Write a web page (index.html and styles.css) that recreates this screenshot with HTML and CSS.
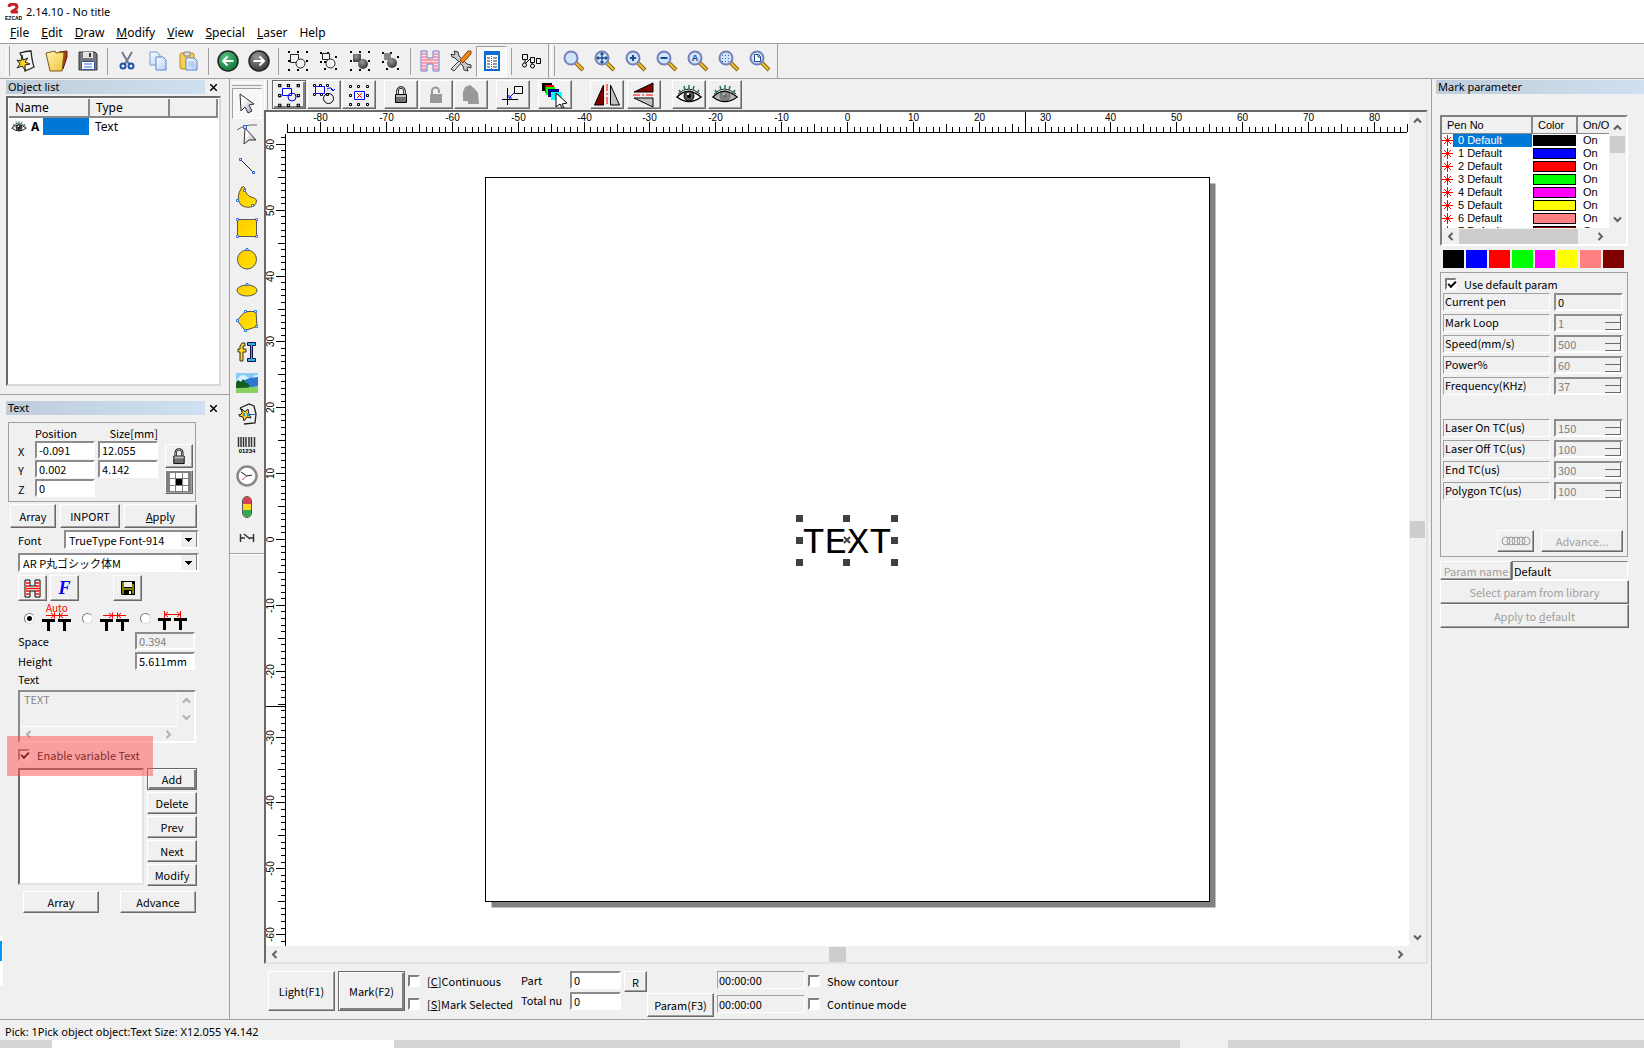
FILE: index.html
```html
<!DOCTYPE html>
<html lang="en">
<head>
  <meta charset="UTF-8">
  <meta name="viewport" content="width=device-width, initial-scale=1.0">
  <title>2.14.10 - No title</title>
  <link rel="stylesheet" href="styles.css">
</head>
<body>
  <svg class="defs" aria-hidden="true">
    <defs>
      <linearGradient id="gold" x1="0" y1="0" x2="1" y2="1"><stop offset="0" stop-color="#ffc800"/><stop offset="1" stop-color="#ffe600"/></linearGradient>
      <linearGradient id="steel" x1="0" y1="0" x2="1" y2="1"><stop offset="0.3" stop-color="#fff"/><stop offset="1" stop-color="#9a9ab4"/></linearGradient>
      <linearGradient id="folder" x1="0" y1="0" x2="1" y2="1"><stop offset="0" stop-color="#fff3b0"/><stop offset="1" stop-color="#f2c23c"/></linearGradient>
      <linearGradient id="paper" x1="0" y1="0" x2="1" y2="1"><stop offset="0" stop-color="#fff"/><stop offset="1" stop-color="#b4d0f4"/></linearGradient>
      <radialGradient id="green" cx=".4" cy=".3" r=".7"><stop offset="0" stop-color="#58c080"/><stop offset="1" stop-color="#0f7a3a"/></radialGradient>
      <radialGradient id="dark" cx=".4" cy=".3" r=".7"><stop offset="0" stop-color="#999"/><stop offset="1" stop-color="#3a3a3a"/></radialGradient>
    </defs>
    <symbol id="up" viewBox="0 0 9 9"><path d="M1 6.500L4.500 3 8 6.500" fill="none" stroke="currentColor" stroke-width="2"/></symbol>
    <symbol id="down" viewBox="0 0 9 9"><path d="M1 2.500L4.500 6 8 2.500" fill="none" stroke="currentColor" stroke-width="2"/></symbol>
    <symbol id="left" viewBox="0 0 9 9"><path d="M6.500 1L3 4.500 6.500 8" fill="none" stroke="currentColor" stroke-width="2"/></symbol>
    <symbol id="right" viewBox="0 0 9 9"><path d="M2.500 1L6 4.500 2.500 8" fill="none" stroke="currentColor" stroke-width="2"/></symbol>
    <symbol id="dots" viewBox="0 0 22 22"><path d="M1 1h2v2H1zM10 1h2v2h-2zM19 1h2v2h-2zM1 10h2v2H1zM19 10h2v2h-2zM1 19h2v2H1zM10 19h2v2h-2zM19 19h2v2h-2z"/></symbol>
    <symbol id="boxes" viewBox="0 0 22 22"><path d="M1.500 1.500h2v2h-2zM9.500 1.500h2v2h-2zM18.500 1.500h2v2h-2zM1.500 10.500h2v2h-2zM18.500 10.500h2v2h-2zM1.500 19.500h2v2h-2zM9.500 19.500h2v2h-2zM18.500 19.500h2v2h-2z" fill="#fff" stroke="#000"/></symbol>
    <symbol id="lens" viewBox="0 0 22 22"><path d="M13 13l7 7" stroke="#8a6414" stroke-width="4"/><path d="M13 13l6.500 6.500" stroke="#f0c030" stroke-width="2"/><circle cx="8" cy="8" r="6.500" fill="#cfe4f8" stroke="#7480b8" stroke-width="2"/></symbol>
    <symbol id="lock" viewBox="0 0 14 18"><path d="M3.500 8V5a3.500 3.500 0 0 1 7 0v3" fill="none" stroke="#000" stroke-width="2.500"/><path d="M3.500 8V5a3.500 3.500 0 0 1 7 0v3" fill="none" stroke="#ccc"/><path d="M1.500 8.500h11v8h-11z" fill="#707070" stroke="#000"/><path d="M2 9h10v2H2z" fill="#bbb"/></symbol>
    <symbol id="star" viewBox="0 0 11 11"><path d="M5.500 0v11M0 5.500h11M2 2l7 7M9 2l-7 7" stroke="red"/></symbol>
    <symbol id="eye" viewBox="0 0 26 20"><path d="M1 12Q12 1 25 12 13 21 1 12z" fill="#fff" stroke="#000" stroke-width="1.500"/><path d="M2 9Q12-1 24 9" fill="none" stroke="#222"/><circle cx="13" cy="11" r="5" fill="#555" stroke="#000"/><circle cx="13" cy="11" r="2"/><path d="M11 8h2v2h-2z" fill="#fff"/><path d="M3 5l2 3M8 1l1 4M13 0v4M18 1l-1 4M23 5l-2 3" stroke="#257060" stroke-width="1.500"/></symbol>
  </svg>

  <header class="titlebar">
    <svg class="logo" width="17" height="18" viewBox="0 0 17 18"><path d="M4 4q0-3 4-3t4 3q0 2-6 5h7" fill="none" stroke="#c81e28" stroke-width="3"/><text x="0" y="17" class="logo-text">EZCAD</text></svg>
    <span>2.14.10 - No title</span>
  </header>
  <nav class="menubar">
    <a href="#"><u>F</u>ile</a>
    <a href="#"><u>E</u>dit</a>
    <a href="#"><u>D</u>raw</a>
    <a href="#"><u>M</u>odify</a>
    <a href="#"><u>V</u>iew</a>
    <a href="#"><u>S</u>pecial</a>
    <a href="#"><u>L</u>aser</a>
    <a href="#">Help</a>
  </nav>

  <div class="toolbar">
    <i class="grip"></i>
    <button class="tool" aria-label="New"><svg width="22" height="22" viewBox="0 0 22 22"><path d="M5 3Q11 1 16 1q1 10 3 16-4 2-9 4Q9 10 5 3z" fill="#f4f4f4" stroke="#222" stroke-width="1.300"/><path d="M7 5l1 5 5-2-3 4 5 2-5 1 0 5-3-4-5 2 3-4-3-4 4 1z" fill="#ffd21e" stroke="#222"/></svg></button>
    <button class="tool" aria-label="Open"><svg width="24" height="22" viewBox="0 0 24 22"><path d="M14 2l8-1v6l-4 12-5 1z" fill="#a33d12" stroke="#5a2208"/><path d="M1 3l9-2 1 2 7-1 1 2-2 17-12 0z" fill="url(#folder)" stroke="#7a5a18"/></svg></button>
    <button class="tool" aria-label="Save"><svg width="20" height="20" viewBox="0 0 20 20"><path d="M1 1h16l2 2v16H1z" fill="#77777d" stroke="#333"/><path d="M5 1h10v6H5z" fill="#e4e4e4"/><path d="M11 2h2v4h-2z" fill="#333"/><rect x="3.500" y="10.500" width="13" height="8" rx="1" fill="#fff" stroke="#2a4c9a"/><path d="M6 13h8M6 16h8" stroke="#2a6cd0"/></svg></button>
    <i class="sep"></i>
    <button class="tool" aria-label="Cut"><svg width="16" height="20" viewBox="0 0 16 20"><path d="M3 1l7 12M13 1L6 13" stroke="#6c7c94" stroke-width="2"/><circle cx="4" cy="15" r="2.500" fill="none" stroke="#2054a8" stroke-width="2"/><circle cx="12" cy="15" r="2.500" fill="none" stroke="#2054a8" stroke-width="2"/></svg></button>
    <button class="tool" aria-label="Copy"><svg width="18" height="20" viewBox="0 0 18 20"><path d="M1 1h7l3 3v10H1z" fill="url(#paper)" stroke="#7a9cd8"/><path d="M7 6h7l3 3v10H7z" fill="url(#paper)" stroke="#5a86d0"/></svg></button>
    <button class="tool" aria-label="Paste"><svg width="19" height="20" viewBox="0 0 19 20"><rect x="1" y="2" width="14" height="16" rx="2" fill="#f4cf50" stroke="#b89018"/><path d="M5 1h6v4H5z" fill="#ddd" stroke="#888"/><path d="M7 7h8l3 3v9H7z" fill="url(#paper)" stroke="#5a86d0"/><path d="M9 11h6M9 13h7M9 15h7" stroke="#9ab8e4"/></svg></button>
    <i class="sep"></i>
    <button class="tool" aria-label="Undo"><svg width="22" height="22" viewBox="0 0 22 22"><circle cx="11" cy="11" r="10" fill="url(#green)" stroke="#222" stroke-width="1.500"/><path d="M16.500 11H6M10.500 6.500L6 11l4.500 4.500" fill="none" stroke="#fff" stroke-width="2"/></svg></button>
    <button class="tool" aria-label="Redo"><svg width="22" height="22" viewBox="0 0 22 22"><circle cx="11" cy="11" r="10" fill="url(#dark)" stroke="#222" stroke-width="1.500"/><path d="M5.500 11H16M11.500 6.500L16 11l-4.500 4.500" fill="none" stroke="#fff" stroke-width="2"/></svg></button>
    <i class="sep"></i>
    <button class="tool" aria-label="Combine"><svg width="22" height="22" viewBox="0 0 22 22"><use href="#dots"/><path d="M3.500 4.500h8v8h-8z" fill="#f4f4f4" stroke="#222"/><circle cx="13.500" cy="13.500" r="4.500" fill="#f4f4f4" stroke="#222"/></svg></button>
    <button class="tool" aria-label="Uncombine"><svg width="22" height="22" viewBox="0 0 22 22"><path d="M2 2h2v2H2zM9 2h2v2H9zM17 6h2v2h-2zM2 11h2v2H2zM6 18h2v2H6zM17 18h2v2h-2zM6 11h2v2H6z"/><path d="M4.500 3.500h7v6h-7z" fill="#f4f4f4" stroke="#222"/><circle cx="12.500" cy="13.500" r="4.500" fill="#f4f4f4" stroke="#222"/></svg></button>
    <button class="tool" aria-label="Group"><svg width="22" height="22" viewBox="0 0 22 22"><use href="#dots"/><rect x="4" y="4" width="8" height="8" rx="1" fill="url(#dark)"/><circle cx="14" cy="14" r="5" fill="url(#dark)"/></svg></button>
    <button class="tool" aria-label="Ungroup"><svg width="22" height="22" viewBox="0 0 22 22"><path d="M2 2h2v2H2zM10 2h2v2h-2zM17 6h2v2h-2zM2 11h2v2H2zM6 18h2v2H6zM17 18h2v2h-2z"/><rect x="4" y="3" width="7" height="7" rx="1" fill="#888"/><circle cx="12" cy="13" r="5" fill="url(#dark)"/></svg></button>
    <i class="sep"></i>
    <button class="tool" aria-label="Hatch"><svg width="20" height="22" viewBox="0 0 20 22"><path d="M1 1h6v7h6V1h6v20h-6v-7H7v7H1z" fill="#ffdce0" stroke="#6878e0"/><path d="M2 4h4M2 7h4M14 4h4M14 7h4M2 10h16M2 13h16M2 16h4M2 19h4M14 16h4M14 19h4" stroke="#f06078"/></svg></button>
    <button class="tool" aria-label="Options"><svg width="22" height="22" viewBox="0 0 22 22"><path d="M1 4l3 1 1-1-1-3 4 1 1 4 8 8 4 1 0 3-3-1-1 1 1 3-4-1-1-4-8-8-3-1z" fill="#c8c8c8" stroke="#333"/><path d="M18 1l3 0 0 3-8 9-3-3z" fill="#f08418" stroke="#8a4408"/><path d="M9 11l2 2-7 8-3-2z" fill="#ddd" stroke="#333"/></svg></button>
    <button class="tool pressed" aria-label="Object properties"><svg width="16" height="20" viewBox="0 0 16 20"><path d="M1 1h14v18H1z" fill="#fff" stroke="#0a6cd0" stroke-width="2"/><path d="M1 1h14v3H1z" fill="#0a6cd0"/><path d="M3 7h3M9 7h4M3 10h3M9 10h4M3 13h3M9 13h4M3 16h3M9 16h4" stroke="#333"/><path d="M7.500 5v13" stroke="#0a6cd0" stroke-dasharray="1 1"/></svg></button>
    <i class="sep"></i>
    <button class="tool" aria-label="Sort"><svg width="20" height="16" viewBox="0 0 20 16"><path d="M1.500 1.500h5v5h-5zM9.500 4.500h4v5h-4zM15.500 5.500h4v5h-4z" fill="none" stroke="#000"/><circle cx="3.500" cy="12" r="2" fill="none" stroke="#000"/><circle cx="11.500" cy="13" r="2" fill="none" stroke="#000"/><path d="M4 6v4M5 10l4-4M11 9v2" stroke="#000"/></svg></button>
    <i class="edge"></i>
    <i class="grip zoom-grip"></i>
    <button class="tool" aria-label="Zoom"><svg width="22" height="22"><use href="#lens"/></svg></button>
    <button class="tool" aria-label="Pan"><svg width="22" height="22" viewBox="0 0 22 22"><use href="#lens"/><path d="M8 3v10M3 8h10M6.500 4.500L8 3l1.500 1.500M6.500 11.500L8 13l1.500-1.500M4.500 6.500L3 8l1.500 1.500M11.500 6.500L13 8l-1.500 1.500" fill="none" stroke="#1c4a90" stroke-width="1.300"/></svg></button>
    <button class="tool" aria-label="Zoom in"><svg width="22" height="22" viewBox="0 0 22 22"><use href="#lens"/><path d="M8 5v6M5 8h6" stroke="#1c4a90" stroke-width="2"/></svg></button>
    <button class="tool" aria-label="Zoom out"><svg width="22" height="22" viewBox="0 0 22 22"><use href="#lens"/><path d="M4.500 8h7" stroke="#1c4a90" stroke-width="2"/></svg></button>
    <button class="tool" aria-label="Zoom all"><svg width="22" height="22" viewBox="0 0 22 22"><use href="#lens"/><text x="8" y="11" class="lens-text">A</text></svg></button>
    <button class="tool" aria-label="Zoom selection"><svg width="22" height="22" viewBox="0 0 22 22"><use href="#lens"/><path d="M4 5.500h9M4 8.500h9M4 11.500h9" stroke="#3a68b0" stroke-dasharray="1 2"/></svg></button>
    <button class="tool" aria-label="Zoom page"><svg width="22" height="22" viewBox="0 0 22 22"><use href="#lens"/><path d="M5.500 4.500h4l2 2v5h-6zM9 5v2h2" fill="#fff" stroke="#1c4a90"/></svg></button>
    <i class="edge"></i>
  </div>

  <main class="workspace">
    <aside class="dock">
      <section class="objects">
        <div class="panel-head"><h2>Object list</h2><button class="close" aria-label="Close object list"><svg width="7" height="7" viewBox="0 0 7 7"><path d="M0 0l7 7M7 0L0 7" stroke="#000" stroke-width="1.500"/></svg></button></div>
        <div class="object-box">
          <table class="object-table">
            <colgroup><col class="col-name"><col class="col-type"><col></colgroup>
            <thead><tr><th>Name</th><th>Type</th><th></th></tr></thead>
            <tbody><tr>
              <td class="object-name"><svg width="16" height="12"><use href="#eye"/></svg><b>A</b><i></i></td>
              <td>Text</td><td></td>
            </tr></tbody>
          </table>
        </div>
      </section>

      <section class="props">
        <div class="panel-head"><h2>Text</h2><button class="close" aria-label="Close text panel"><svg width="7" height="7" viewBox="0 0 7 7"><path d="M0 0l7 7M7 0L0 7" stroke="#000" stroke-width="1.500"/></svg></button></div>
        <div class="position">
          <div class="coords">
            <span></span><span>Position</span><span class="size">Size[mm]</span>
            <label for="px">X</label><input id="px" class="field" value="-0.091"><input class="field" value="12.055" aria-label="Width">
            <label for="py">Y</label><input id="py" class="field" value="0.002"><input class="field" value="4.142" aria-label="Height">
            <label for="pz">Z</label><input id="pz" class="field" value="0">
          </div>
          <div class="pos-buttons">
            <button class="btn" aria-label="Lock ratio"><svg width="14" height="17"><use href="#lock"/></svg></button>
            <button class="btn anchor" aria-label="Anchor"><svg width="18" height="18" viewBox="0 0 18 18"><path d="M0 0h5v5H0zM6 0h6v5H6zM13 0h5v5h-5zM0 6h5v6H0zM13 6h5v6h-5zM0 13h5v5H0zM6 13h6v5H6zM13 13h5v5h-5z" fill="#fff"/><path d="M6 6h6v6H6z"/></svg></button>
          </div>
        </div>
        <div class="actions"><button class="btn w-array">Array</button><button class="btn w-import">INPORT</button><button class="btn grow"><u>A</u>pply</button></div>
        <div class="font-row"><label for="fonttype">Font</label><select id="fonttype"><option>TrueType Font-914</option></select></div>
        <select class="font-name" aria-label="Font name"><option>AR P丸ゴシック体M</option></select>
        <div class="font-tools">
          <button class="btn" aria-label="Hatch text"><svg width="17" height="19" viewBox="0 0 17 19"><path d="M1 1h5v6h5V1h5v17h-5v-6H6v6H1z" fill="#fff" stroke="#000"/><path d="M2 4h4M2 7h4M11 4h4M11 7h4M2 9.500h13M2 12h4M2 15h4M11 12h4M11 15h4" stroke="red" stroke-width="1.500"/></svg></button>
          <button class="btn font-f" aria-label="Font settings">F</button>
          <button class="btn save" aria-label="Save font"><svg width="14" height="14" viewBox="0 0 14 14"><path d="M0 0h14v14H1l-1-1z"/><path d="M1 1h2v6h8V3h2v10H1z" fill="#808000"/><path d="M3 1h8v5H3z" fill="#eee"/><path d="M3 9h8v5H3z"/><path d="M8 10h2v3H8z" fill="#fff"/></svg></button>
        </div>
        <div class="spacing">
          <label><input type="radio" name="space" checked aria-label="Auto"><svg width="30" height="30" viewBox="0 -3 30 30"><text x="5" y="8" class="auto-text">Auto</text><path d="M5 11.500h22M13.500 8.500v6M18.500 8.500v6M10 9l3 2.500-3 2.500M22 9l-3 2.500 3 2.500" fill="none" stroke="red"/><path d="M1 15h13v3H9v9H6v-9H1zM17 15h13v3h-5v9h-3v-9h-5z"/></svg></label>
          <label><input type="radio" name="space" aria-label="Inner"><svg width="30" height="30" viewBox="0 -3 30 30"><path d="M4 11.500h23M13.500 8.500v6M18.500 8.500v6M10 9l3 2.500-3 2.500M22 9l-3 2.500 3 2.500" fill="none" stroke="red"/><path d="M1 15h13v3H9v9H6v-9H1zM17 15h13v3h-5v9h-3v-9h-5z"/></svg></label>
          <label><input type="radio" name="space" aria-label="Center"><svg width="30" height="30" viewBox="0 -3 30 30"><path d="M7 10.500h17M7.500 7v7M23.500 7v7M11 8l-3 2.500 3 2.500M20 8l3 2.500-3 2.500" fill="none" stroke="red"/><path d="M1 14h13v3H9v9H6v-9H1zM17 14h13v3h-5v9h-3v-9h-5z"/></svg></label>
        </div>
        <div class="line"><label for="space">Space</label><input id="space" class="field" value="0.394" disabled></div>
        <div class="line"><label for="height">Height</label><input id="height" class="field" value="5.611mm"></div>
        <label class="text-label" for="content">Text</label>
        <div class="memo">
          <textarea id="content" disabled>TEXT</textarea>
          <div class="memo-v"><svg width="9" height="9"><use href="#up"/></svg><svg width="9" height="9"><use href="#down"/></svg></div>
          <div class="memo-h"><svg width="9" height="9"><use href="#left"/></svg><svg width="9" height="9"><use href="#right"/></svg></div>
        </div>
        <div class="variable">
          <label class="check"><input type="checkbox" checked>Enable variable Text</label>
          <div class="variable-body">
            <div class="listbox"></div>
            <div class="stack"><button class="btn default">Add</button><button class="btn">Delete</button><button class="btn">Prev</button><button class="btn">Next</button><button class="btn">Modify</button></div>
          </div>
          <div class="highlight"></div>
        </div>
        <div class="foot"><button class="btn">Array</button><button class="btn">Advance</button></div>
      </section>
      <i class="behind"></i>
    </aside>

    <div class="palette">
      <div class="palette-tools">
        <i class="hgrip"></i>
        <button class="tool pressed" aria-label="Pick"><svg width="18" height="22" viewBox="0 0 18 22"><path d="M2 1l14 10-5 1 3 6-4 2-3-6-4 4z" fill="url(#steel)" stroke="#333"/></svg></button>
        <button class="tool" aria-label="Node edit"><svg width="20" height="22" viewBox="0 0 20 22"><path d="M0 6q8-6 20-5" fill="none" stroke="#666"/><path d="M8 4l11 12-7 0-5 4z" fill="url(#steel)" stroke="#333"/><path d="M6.500 1.500h3v3h-3z" fill="#cfe4ff" stroke="#2864d0"/></svg></button>
        <button class="tool" aria-label="Line"><svg width="16" height="16" viewBox="0 0 16 16"><path d="M2 2l12 12" stroke="#222"/><path d="M.5.5h2v2h-2zM13.500 13.500h2v2h-2z" fill="#fff" stroke="#2864d0"/></svg></button>
        <button class="tool" aria-label="Curve"><svg width="22" height="22" viewBox="0 0 22 22"><path d="M6 1Q-1 12 5 19q6 4 13 1 5-6 0-8-9-2-9-10-1-2-3-1z" fill="url(#gold)" stroke="#6a4c30"/><path d="M7.500 3.500h2v2h-2zM.5 13.500h2v2h-2zM15.500 18.500h2v2h-2z" fill="#fff" stroke="#2878e0"/></svg></button>
        <button class="tool" aria-label="Rectangle"><svg width="22" height="20" viewBox="0 0 22 20"><path d="M1.500 1.500h19v17h-19z" fill="url(#gold)" stroke="#555"/><path d="M.5.5h2v2h-2zM19.500.5h2v2h-2zM.5 17.500h2v2h-2zM19.500 17.500h2v2h-2z" fill="#fff" stroke="#4a6ee0"/></svg></button>
        <button class="tool" aria-label="Circle"><svg width="22" height="22" viewBox="0 0 22 22"><circle cx="11" cy="11.500" r="9.500" fill="url(#gold)" stroke="#555"/><path d="M10 .5h2v2h-2z" fill="#fff" stroke="#2878e0"/></svg></button>
        <button class="tool" aria-label="Ellipse"><svg width="22" height="14" viewBox="0 0 22 14"><ellipse cx="11" cy="7.500" rx="10" ry="5.500" fill="url(#gold)" stroke="#555"/><path d="M10 .5h2v2h-2z" fill="#fff" stroke="#2878e0"/></svg></button>
        <button class="tool" aria-label="Polygon"><svg width="22" height="22" viewBox="0 0 22 22"><path d="M1 10.500l8-9h11l1 15-12 4z" fill="url(#gold)" stroke="#555"/><path d="M.5 9.500h2v2h-2zM8.500.5h2v2h-2zM18.500.5h2v2h-2zM19.500 15.500h2v2h-2zM8.500 19.500h2v2h-2z" fill="#fff" stroke="#2878e0"/></svg></button>
        <button class="tool" aria-label="Text"><svg width="20" height="20" viewBox="0 0 20 20"><path d="M8 1H5L3 4v3H1v3h2v9h3v-9h3V7H6V4h2z" fill="#ffd21e" stroke="#333"/><path d="M10.500.5h8v3h-3v13h3v3h-8v-3h3v-13h-3z" fill="#38b0f0" stroke="#114"/></svg></button>
        <button class="tool" aria-label="Bitmap"><svg width="22" height="20" viewBox="0 0 22 20"><path d="M0 0h22v20H0z" fill="#8ccaf6"/><path d="M3 4q4-4 8 0t8-2l3 0v6H0z" fill="#d8f0ff"/><path d="M6 8l8-3 8-1v10H8z" fill="#2c78d0"/><path d="M0 10l2-3 3 2 2-3 3 4 2 0 2 5-14 3z" fill="#125c20"/><path d="M0 15q12 0 22-2v7H0z" fill="#88d060"/></svg></button>
        <button class="tool" aria-label="Vector file"><svg width="20" height="22" viewBox="0 0 20 22"><path d="M3 5l9-4 5 2 2 8-1 9-11 1M3 5l3 4" fill="none" stroke="#222" stroke-width="1.300"/><path d="M1 11.500h18" stroke="#2864b0"/><path d="M5 6l3 3 3-3 1 5 2 4-4-1-3 4-1-4-4-1 3-3z" fill="#ffc81e" stroke="#222"/><path d="M6 10h2v3H6zM10 10h2v3h-2z" fill="#18a0e8"/></svg></button>
        <button class="tool" aria-label="Barcode"><svg width="20" height="16" viewBox="0 0 20 16"><path d="M1.500 0v10M4 0v10M6.500 0v10M9 0v10M12 0v10M14.500 0v10M17.500 0v10" stroke="#333" stroke-width="1.500"/><text x="10" y="16" class="barcode-text">01234</text></svg></button>
        <button class="tool" aria-label="Timer"><svg width="22" height="22" viewBox="0 0 22 22"><circle cx="11" cy="11" r="9.500" fill="#fff" stroke="#888" stroke-width="2.500"/><path d="M5 7l6 4 5-1" fill="none" stroke="#222"/><path d="M11 11l-5 4" stroke="#e05050"/></svg></button>
        <button class="tool" aria-label="IO"><svg width="10" height="22" viewBox="0 0 10 22"><rect x=".5" y=".5" width="9" height="21" rx="4.500" fill="#ffd820" stroke="#555"/><path d="M1 8V5a4 4 0 0 1 8 0v3z" fill="#d84058"/><path d="M1 14v3a4 4 0 0 0 8 0v-3z" fill="#30a858"/></svg></button>
        <button class="tool" aria-label="Encoder"><svg width="16" height="10" viewBox="0 0 16 10"><path d="M1.500 1v8M14.500 1v8M2 5h4M5 1l6 5M10 5h4" fill="none" stroke="#333" stroke-width="1.500"/></svg></button>
      </div>
    </div>

    <section class="editor">
      <div class="edit-tools">
        <i class="grip"></i>
        <div class="set">
          <button class="btn default" aria-label="Select mode"><svg width="24" height="24" viewBox="0 0 24 24"><use href="#boxes"/><path d="M5.500 5.500h9v7h-9z" fill="#fff" stroke="#00f"/><circle cx="15" cy="14" r="4" fill="none" stroke="#00f"/></svg></button>
          <button class="btn" aria-label="Rotate mode"><svg width="24" height="24" viewBox="0 0 24 24"><path d="M1.500 1.500h2v2h-2zM7.500 1.500h2v2h-2zM14.500 1.500h2v2h-2zM1.500 10.500h2v2h-2zM8.500 10.500h2v2h-2zM14.500 10.500h2v2h-2z" fill="#fff" stroke="#000"/><path d="M3.500 3.500h9v7h-9z" fill="#fff" stroke="#00f"/><circle cx="16.500" cy="15.500" r="5" fill="none" stroke="#000"/><path d="M15 6q5-3 6 2m-2-2l2 2 2-2" fill="none" stroke="#00f"/></svg></button>
          <button class="btn" aria-label="Delete mode"><svg width="22" height="22" viewBox="0 0 22 22"><use href="#boxes"/><path d="M6.500 7.500h10v8h-10z" fill="#fff" stroke="#00f"/><path d="M9 9l5 5M14 9l-5 5" stroke="red"/></svg></button>
        </div>
        <div class="set">
          <button class="btn" aria-label="Lock"><svg width="14" height="18"><use href="#lock"/></svg></button>
          <button class="btn" aria-label="Unlock" disabled><svg width="14" height="18" viewBox="0 0 14 18"><path d="M3 9V5a3.500 3.500 0 0 1 7 0v2" fill="none" stroke="#999" stroke-width="2"/><path d="M1 8h12v9H1z" fill="#999"/></svg></button>
          <button class="btn" aria-label="Unlock all" disabled><svg width="18" height="20" viewBox="0 0 18 20"><path d="M1 7l2-5 5-2 5 4 3 4 1 11H6v-3H1z" fill="#999"/></svg></button>
        </div>
        <div class="set"><button class="btn" aria-label="Put to origin"><svg width="22" height="20" viewBox="0 0 22 20"><path d="M0 14.500h16M5.500 3v17" stroke="#000"/><path d="M12.500 1.500h8v7h-8z" fill="none" stroke="#000"/><path d="M12 8l-5 5m0-3v3h3" fill="none" stroke="#00f"/></svg></button></div>
        <div class="set"><button class="btn" aria-label="Pen order"><svg width="26" height="26" viewBox="0 0 26 26"><path d="M0 1h10v8H0z"/><path d="M3 3h9v8H3z" fill="red"/><path d="M4 5h9v8H4z" fill="#0f0"/><path d="M6 7h11v8H6z" fill="#000080"/><path d="M9 10h11v8H9z" fill="#0ff"/><path d="M14 11l11 10-5 1 2 4h-2l-2-4-4 3z" fill="#fff" stroke="#000"/></svg></button></div>
        <div class="set wide">
          <button class="btn" aria-label="Mirror horizontal"><svg width="26" height="22" viewBox="0 0 26 22"><path d="M9.500 1v20h-9z" fill="#800000" stroke="#000"/><path d="M16.500 1v20h9z" fill="#c0c0c0" stroke="#000"/><path d="M13 0v22" stroke="red" stroke-dasharray="7 2 2 2"/></svg></button>
          <button class="btn" aria-label="Mirror vertical"><svg width="22" height="26" viewBox="0 0 22 26"><path d="M20 1v9H1z" fill="#800000" stroke="#000"/><path d="M20 25v-9H1z" fill="#c0c0c0" stroke="#000"/><path d="M0 13h22" stroke="red" stroke-dasharray="7 2 2 2"/></svg></button>
        </div>
        <div class="set last">
          <button class="btn" aria-label="Show"><svg width="26" height="20"><use href="#eye"/></svg></button>
          <button class="btn" aria-label="Hide"><svg width="26" height="20" viewBox="0 0 26 20"><use href="#eye"/><path d="M2 12Q12 2 24 12 13 20 2 12z" fill="#999" fill-opacity=".7"/></svg></button>
        </div>
      </div>

      <div class="frame">
        <svg class="canvas" id="canvas"></svg>
        <div class="vbar"><svg width="9" height="9"><use href="#up"/></svg><i></i><svg width="9" height="9"><use href="#down"/></svg></div>
        <div class="hbar"><svg width="9" height="9"><use href="#left"/></svg><i></i><svg width="9" height="9"><use href="#right"/></svg></div>
      </div>

      <div class="mark-bar">
        <button class="btn big">Light(F1)</button>
        <button class="btn big default">Mark(F2)</button>
        <div class="pair checks"><label class="check"><input type="checkbox"><span>[<u>C</u>]Continuous</span></label><label class="check"><input type="checkbox"><span>[<u>S</u>]Mark Selected</span></label></div>
        <div class="pair counts"><label for="part">Part</label><label for="total">Total nu</label></div>
        <div class="pair numbers"><input id="part" class="field" value="0"><input id="total" class="field" value="0"></div>
        <button class="btn reset">R</button>
        <button class="btn param-key">Param(F3)</button>
        <div class="pair times"><output>00:00:00</output><output>00:00:00</output></div>
        <div class="pair"><label class="check"><input type="checkbox">Show contour</label><label class="check"><input type="checkbox">Continue mode</label></div>
      </div>
    </section>

    <aside class="mark">
      <h2>Mark parameter</h2>
      <div class="pen-box">
        <div class="pen-rows">
          <table class="pens">
            <colgroup><col class="pen-no"><col class="pen-color"><col></colgroup>
            <thead><tr><th>Pen No</th><th>Color</th><th>On/O</th></tr></thead>
            <tbody>
              <tr><td><svg width="11" height="11"><use href="#star"/></svg><span class="selected">0 Default</span></td><td><i class="c0"></i></td><td>On</td></tr>
              <tr><td><svg width="11" height="11"><use href="#star"/></svg><span>1 Default</span></td><td><i class="c1"></i></td><td>On</td></tr>
              <tr><td><svg width="11" height="11"><use href="#star"/></svg><span>2 Default</span></td><td><i class="c2"></i></td><td>On</td></tr>
              <tr><td><svg width="11" height="11"><use href="#star"/></svg><span>3 Default</span></td><td><i class="c3"></i></td><td>On</td></tr>
              <tr><td><svg width="11" height="11"><use href="#star"/></svg><span>4 Default</span></td><td><i class="c4"></i></td><td>On</td></tr>
              <tr><td><svg width="11" height="11"><use href="#star"/></svg><span>5 Default</span></td><td><i class="c5"></i></td><td>On</td></tr>
              <tr><td><svg width="11" height="11"><use href="#star"/></svg><span>6 Default</span></td><td><i class="c6"></i></td><td>On</td></tr>
              <tr><td><svg width="11" height="11"><use href="#star"/></svg><span>7 Default</span></td><td><i class="c7"></i></td><td>On</td></tr>
            </tbody>
          </table>
        </div>
        <div class="vbar pen-v"><svg width="9" height="9"><use href="#up"/></svg><i></i><svg width="9" height="9"><use href="#down"/></svg></div>
        <div class="hbar pen-h"><svg width="9" height="9"><use href="#left"/></svg><i></i><svg width="9" height="9"><use href="#right"/></svg></div>
      </div>
      <div class="swatches"><i class="c0"></i><i class="c1"></i><i class="c2"></i><i class="c3"></i><i class="c4"></i><i class="c5"></i><i class="c6"></i><i class="c7"></i></div>
      <div class="params">
        <label class="check"><input type="checkbox" checked>Use default param</label>
        <div class="param"><label for="pen">Current pen</label><input id="pen" class="field" value="0" readonly></div>
        <div class="param"><label for="loop">Mark Loop</label><div class="spin"><input id="loop" value="1" disabled><i></i><i></i></div></div>
        <div class="param"><label for="speed">Speed(mm/s)</label><div class="spin"><input id="speed" value="500" disabled><i></i><i></i></div></div>
        <div class="param"><label for="power">Power%</label><div class="spin"><input id="power" value="60" disabled><i></i><i></i></div></div>
        <div class="param"><label for="freq">Frequency(KHz)</label><div class="spin"><input id="freq" value="37" disabled><i></i><i></i></div></div>
        <div class="param gap"><label for="lon">Laser On TC(us)</label><div class="spin"><input id="lon" value="150" disabled><i></i><i></i></div></div>
        <div class="param"><label for="loff">Laser Off TC(us)</label><div class="spin"><input id="loff" value="100" disabled><i></i><i></i></div></div>
        <div class="param"><label for="end">End TC(us)</label><div class="spin"><input id="end" value="300" disabled><i></i><i></i></div></div>
        <div class="param"><label for="poly">Polygon TC(us)</label><div class="spin"><input id="poly" value="100" disabled><i></i><i></i></div></div>
        <div class="advance">
          <button class="btn" aria-label="Wobble" disabled><svg width="30" height="10" viewBox="0 0 30 10"><g fill="none" stroke="#999"><circle cx="5" cy="5" r="4"/><circle cx="10" cy="5" r="4"/><circle cx="15" cy="5" r="4"/><circle cx="20" cy="5" r="4"/><circle cx="25" cy="5" r="4"/></g></svg></button>
          <button class="btn" disabled>Advance...</button>
        </div>
      </div>
      <div class="param-name"><button class="btn" disabled>Param name</button><input value="Default" aria-label="Param name" readonly></div>
      <button class="btn lib" disabled>Select param from library</button>
      <button class="btn lib" disabled><span>Apply to <u>d</u>efault</span></button>
    </aside>
  </main>

  <footer class="status">Pick: 1Pick object object:Text Size: X12.055 Y4.142</footer>
  <div class="strip"><i></i><i></i></div>
  <script src="script.js"></script>
</body>
</html>
```
FILE: styles.css
```css
* {
  box-sizing: border-box;
}
html,
body {
  height: 100%;
}
body {
  margin: 0;
  display: flex;
  flex-direction: column;
  background: #f0f0f0;
  color: #000;
  font: 11px/14px "Noto Sans CJK JP", sans-serif;
  overflow: hidden;
}
svg {
  display: block;
  flex: none;
}
i {
  font-style: normal;
}
button,
input,
select,
textarea {
  font: inherit;
  color: inherit;
  margin: 0;
}
.defs {
  position: absolute;
  width: 0;
  height: 0;
}

/* window title and menu */
.titlebar {
  display: flex;
  align-items: center;
  gap: 4px;
  height: 24px;
  padding-left: 5px;
  background: #fff;
  font: 11px/16px "Noto Sans", sans-serif;
}
.logo-text {
  font: bold 5px "Liberation Sans", sans-serif;
}
.menubar {
  display: flex;
  gap: 12px;
  height: 19px;
  padding-left: 10px;
  background: #fff;
  font: 12px/17px "Noto Sans", sans-serif;
}
.menubar a {
  color: #000;
  text-decoration: none;
}

/* main toolbar */
.toolbar {
  display: flex;
  align-items: center;
  height: 36px;
  padding-left: 6px;
  border-top: 1px solid #a0a0a0;
  border-bottom: 1px solid #a0a0a0;
}
.grip {
  width: 4px;
  height: 30px;
  border-right: 1px solid #a0a0a0;
  border-left: 1px solid #fff;
}
.zoom-grip {
  margin: 0 3px 0 2px;
}
.sep {
  width: 8px;
  height: 27px;
  background: linear-gradient(#a0a0a0, #a0a0a0) 4px 0 / 1px 100% no-repeat;
}
.edge {
  width: 3px;
  height: 34px;
  border-right: 1px solid #a0a0a0;
}
.tool {
  display: flex;
  align-items: center;
  justify-content: center;
  width: 31px;
  height: 31px;
  padding: 0;
  border: 0;
  background: none;
}
.tool.pressed {
  border: 1px solid;
  border-color: #a0a0a0 #fff #fff #a0a0a0;
  background: #f8f8f8;
}
.lens-text {
  font: bold 9px "Liberation Sans", sans-serif;
  fill: #1c4a90;
  text-anchor: middle;
}

/* shared controls */
.btn {
  display: flex;
  align-items: center;
  justify-content: center;
  padding: 0;
  border: 1px solid;
  border-color: #fff #696969 #696969 #fff;
  box-shadow: inset -1px -1px #a0a0a0;
  background: #f0f0f0;
  white-space: nowrap;
}
.btn.default {
  border-color: #696969;
  box-shadow: inset 1px 1px #fff, inset -2px -2px #808080;
}
.btn:disabled {
  color: #a0a0a0;
}
.field {
  width: 100%;
  min-width: 0;
  height: 18px;
  padding: 0 2px;
  border: 2px solid;
  border-color: #8c8c8c #fff #fff #8c8c8c;
  border-radius: 0;
  background: #fff;
  line-height: 14px;
}
.field:disabled,
.field:read-only {
  background: #f0f0f0;
}
.field:disabled {
  color: #808080;
}
.check {
  display: flex;
  align-items: center;
  gap: 7px;
  white-space: nowrap;
}
.check input {
  appearance: none;
  flex: none;
  display: grid;
  width: 12px;
  height: 12px;
  border: 2px solid;
  border-color: #808080 #fff #fff #808080;
  background: #fff;
}
.check input:checked::before {
  content: "";
  width: 6px;
  height: 3px;
  margin: 1px;
  border: solid #000;
  border-width: 0 0 2px 2px;
  transform: rotate(-45deg);
}
/* drop-down arrow made of four stacked bars on a grey button */
select {
  appearance: none;
  height: 19px;
  padding: 0 3px;
  border: 2px solid;
  border-color: #8c8c8c #fff #fff #8c8c8c;
  border-radius: 0;
  background-color: #fff;
  background-image: linear-gradient(#000, #000), linear-gradient(#000, #000), linear-gradient(#000, #000), linear-gradient(#000, #000), linear-gradient(90deg, #f0f0f0 15px, #808080 15px);
  background-size: 7px 1px, 5px 1px, 3px 1px, 1px 1px, 16px 100%;
  background-position: right 5px top 6px, right 6px top 7px, right 7px top 8px, right 8px top 9px, right top;
  background-repeat: no-repeat;
  line-height: 14px;
}
h2 {
  margin: 0;
  font: 11px/14px "Noto Sans", sans-serif;
}

/* docking area */
.workspace {
  flex: 1;
  display: flex;
  min-height: 0;
}
.dock {
  position: relative;
  width: 230px;
  flex: none;
  border-right: 1px solid #a0a0a0;
}
.objects {
  height: 316px;
  padding: 1px 8px 0 6px;
  border-bottom: 1px solid #a0a0a0;
}
.panel-head {
  display: flex;
  align-items: center;
  gap: 5px;
}
.panel-head h2 {
  flex: 1;
  padding-left: 2px;
  background: linear-gradient(90deg, #bfcddb, #cfe0f0);
}
.close {
  padding: 0 4px 0 0;
  border: 0;
  background: none;
}
.object-box {
  height: 290px;
  margin-top: 2px;
  padding: 1px;
  border: 2px solid;
  border-color: #696969 #d8d8d8 #d8d8d8 #696969;
  background: #fff;
}
.object-table {
  width: 100%;
  border-collapse: collapse;
  table-layout: fixed;
  font: 12px/16px "Noto Sans", sans-serif;
}
.col-name,
.col-type {
  width: 80px;
}
.object-table th {
  height: 18px;
  padding: 0 6px;
  border-right: 2px solid #888;
  border-bottom: 2px solid #888;
  background: #f0f0f0;
  font-weight: normal;
  text-align: left;
}
.object-table td {
  height: 17px;
  padding: 0 6px;
}
.object-table .object-name {
  display: flex;
  align-items: center;
  gap: 4px;
  padding: 0 0 0 2px;
}
.object-name i {
  flex: 1;
  height: 17px;
  background: #0078d7;
}

/* text properties */
.props {
  padding: 6px 8px 0 6px;
}
.position {
  display: flex;
  justify-content: space-between;
  width: 188px;
  height: 80px;
  margin: 7px 0 0 2px;
  padding: 3px 2px;
  border: 1px solid #a0a0a0;
}
.coords {
  display: grid;
  grid-template-columns: 16px 60px 60px;
  grid-template-rows: 14px;
  grid-auto-rows: 18px;
  gap: 1px 3px;
  padding-left: 5px;
}
.coords label {
  padding: 3px 2px;
}
.size {
  text-align: right;
}
.pos-buttons {
  display: flex;
  flex-direction: column;
  gap: 2px;
  padding-top: 18px;
}
.pos-buttons .btn {
  width: 28px;
  height: 24px;
}
.pos-buttons .anchor {
  background: #808080;
}
.actions {
  display: flex;
  gap: 4px;
  width: 187px;
  margin: 2px 0 0 4px;
}
.actions .btn {
  height: 24px;
}
.w-array {
  width: 46px;
}
.w-import {
  width: 60px;
}
.grow {
  flex: 1;
}
.font-row {
  display: flex;
  align-items: center;
  justify-content: space-between;
  width: 181px;
  margin: 2px 0 4px 12px;
}
.font-row select {
  width: 135px;
}
.font-name {
  display: block;
  width: 181px;
  margin-left: 12px;
}
.font-tools {
  display: flex;
  gap: 3px;
  padding: 3px 0 0 12px;
}
.font-tools .btn {
  width: 29px;
  height: 26px;
}
.font-tools .save {
  margin-left: 31px;
}
.font-f {
  color: #00f;
  font: italic bold 18px "Liberation Serif", serif;
}
.spacing {
  display: flex;
  width: 174px;
  margin: 0 0 1px 18px;
}
.spacing label {
  display: flex;
  gap: 6px;
  width: 58px;
}
.spacing input {
  appearance: none;
  width: 11px;
  height: 11px;
  margin-top: 12px;
  border: 1px solid;
  border-color: #808080 #ddd #ddd #808080;
  border-radius: 50%;
  background: #fff;
}
.spacing input:checked {
  background: radial-gradient(#000 2px, #fff 3px);
}
.auto-text {
  font: 10px "Noto Sans CJK JP", sans-serif;
  fill: red;
}
.line {
  display: flex;
  justify-content: space-between;
  align-items: center;
  width: 177px;
  margin: 0 0 2px 12px;
}
.line .field {
  width: 60px;
}
.text-label {
  display: block;
  margin: 1px 0 4px 12px;
}
.memo {
  display: grid;
  grid-template-columns: 1fr 17px;
  grid-template-rows: 1fr 15px;
  width: 178px;
  height: 53px;
  margin-left: 12px;
  border: 2px solid;
  border-color: #8c8c8c #fff #fff #8c8c8c;
  color: #b0b0b0;
}
.memo textarea {
  min-width: 0;
  min-height: 0;
  padding: 0 4px;
  border: 0;
  background: none;
  color: #888;
  resize: none;
  overflow: hidden;
}
.memo-v {
  display: flex;
  flex-direction: column;
  justify-content: space-around;
  align-items: center;
  border-left: 1px solid #fff;
}
.memo-h {
  display: flex;
  justify-content: space-between;
  padding: 3px 4px;
  border-top: 1px solid #fff;
}
.variable {
  position: relative;
  width: 179px;
  margin-left: 12px;
  padding-top: 5px;
}
.variable-body {
  display: flex;
  justify-content: space-between;
  margin-top: 6px;
}
.listbox {
  width: 126px;
  height: 117px;
  border: 2px solid;
  border-color: #696969 #e3e3e3 #e3e3e3 #696969;
  background: #fff;
}
.stack {
  display: flex;
  flex-direction: column;
  gap: 2px;
  width: 50px;
}
.stack .btn {
  height: 22px;
}
.highlight {
  position: absolute;
  top: -7px;
  left: -11px;
  width: 146px;
  height: 40px;
  background: rgba(255, 80, 80, 0.5);
  pointer-events: none;
}
.foot {
  display: flex;
  justify-content: space-between;
  width: 173px;
  margin: 5px 0 0 17px;
}
.foot .btn {
  width: 76px;
  height: 22px;
}
.behind {
  position: absolute;
  left: 0;
  bottom: 33px;
  width: 3px;
  height: 50px;
  border: solid #fff;
  border-width: 5px 1px 25px 0;
  background: #009bf0;
}

/* drawing tools */
.palette {
  width: 34px;
  flex: none;
}
.palette-tools {
  display: flex;
  flex-direction: column;
  align-items: center;
  padding-top: 3px;
  border-bottom: 1px solid #a0a0a0;
  box-shadow: 0 1px #fff;
}
.palette-tools .pressed {
  width: 30px;
}
.hgrip {
  width: 30px;
  height: 4px;
  margin-bottom: 2px;
  border-top: 1px solid #fff;
  border-bottom: 1px solid #a0a0a0;
}
.barcode-text {
  font: bold 6px "Liberation Sans", sans-serif;
  text-anchor: middle;
}

/* editor */
.editor {
  flex: 1;
  display: flex;
  flex-direction: column;
  min-width: 0;
}
.edit-tools {
  display: flex;
  align-items: center;
  gap: 8px;
  height: 31px;
}
.edit-tools .grip {
  margin-right: -4px;
}
.set {
  display: flex;
  gap: 1px;
}
.set.wide {
  gap: 3px;
  margin: 0 3px 0 10px;
}
.set.last {
  gap: 2px;
}
.set .btn {
  width: 34px;
  height: 29px;
}
.frame {
  flex: 1;
  display: grid;
  grid-template-columns: 1fr 17px;
  grid-template-rows: 1fr 16px;
  min-height: 0;
  margin-right: 3px;
  border: 2px solid;
  border-color: #696969 #e3e3e3 #e3e3e3 #696969;
}
.canvas {
  width: 100%;
  height: 100%;
  min-width: 0;
  min-height: 0;
  background: #fff;
}
.ruler {
  font: 10px "Liberation Sans", sans-serif;
  text-anchor: middle;
}
.drawing-text {
  font: 37px "Liberation Mono", monospace;
  text-anchor: middle;
}
.vbar,
.hbar {
  display: flex;
  align-items: center;
  justify-content: space-between;
  background: #f0f0f0;
  color: #606060;
}
.vbar {
  flex-direction: column;
  padding: 4px 0;
}
.hbar {
  padding: 0 4px;
}
.vbar i {
  width: 15px;
  height: 17px;
  background: #cdcdcd;
}
.hbar i {
  width: 17px;
  height: 15px;
  background: #cdcdcd;
}
.mark-bar {
  display: flex;
  gap: 3px;
  height: 55px;
  padding: 7px 0 0 4px;
  white-space: nowrap;
}
.mark-bar .big {
  width: 67px;
  height: 40px;
}
.pair {
  display: flex;
  flex-direction: column;
  gap: 4px;
}
.pair .check {
  height: 19px;
}
.checks {
  width: 106px;
  overflow: hidden;
}
.counts {
  width: 41px;
  margin-left: 4px;
  gap: 6px;
  padding-top: 2px;
  overflow: hidden;
}
.numbers {
  width: 51px;
  gap: 3px;
  margin-left: 5px;
}
.mark-bar .reset {
  width: 23px;
  height: 21px;
}
.mark-bar .param-key {
  align-self: flex-end;
  width: 67px;
  height: 24px;
  margin: 0 0 2px -3px;
}
.times {
  width: 88px;
  gap: 6px;
}
.times output {
  height: 18px;
  padding: 1px;
  border: 1px solid;
  border-color: #a0a0a0 #fff #fff #a0a0a0;
}

/* mark parameters */
.mark {
  width: 213px;
  flex: none;
  padding: 1px 0 0 8px;
  border-left: 1px solid #a0a0a0;
}
.mark h2 {
  margin-left: -4px;
  padding-left: 2px;
  background: linear-gradient(90deg, #bfcddb, #cfe0f0);
}
.pen-box {
  display: grid;
  grid-template-columns: 1fr 17px;
  grid-template-rows: 1fr 16px;
  width: 188px;
  height: 131px;
  margin-top: 21px;
  border: 2px solid;
  border-color: #808080 #fff #fff #808080;
}
.pen-rows {
  overflow: hidden;
  background: #fff;
}
.pens {
  width: 100%;
  border-collapse: collapse;
  table-layout: fixed;
  font-family: "Liberation Sans", sans-serif;
}
.pen-no {
  width: 90px;
}
.pen-color {
  width: 45px;
}
.pens th {
  height: 16px;
  padding: 0 5px;
  border-right: 2px solid #888;
  border-bottom: 1px solid #888;
  background: #f0f0f0;
  font-weight: normal;
  text-align: left;
}
.pens th:last-child {
  padding-right: 0;
  border-right: 0;
}
.pens td {
  height: 13px;
  padding: 0 0 0 6px;
  line-height: 13px;
}
.pens td:first-child {
  display: flex;
  align-items: center;
  padding: 0;
}
.pens td:nth-child(2) {
  padding: 0 1px;
}
.pens span {
  flex: 1;
  padding-left: 5px;
}
.pens .selected {
  background: #0078d7;
  color: #fff;
}
.pens i {
  display: block;
  height: 11px;
  border: 1px solid #000;
}
.pen-v {
  padding-top: 6px;
}
.pen-v i {
  margin-bottom: auto;
  margin-top: 4px;
}
.pen-h i {
  width: 119px;
  margin: 0 auto 0 4px;
}
.swatches {
  display: flex;
  gap: 2px;
  width: 181px;
  margin: 4px 0 4px 3px;
}
.swatches i {
  flex: 1;
  height: 18px;
}
.c0 { background: #000; }
.c1 { background: #00f; }
.c2 { background: #f00; }
.c3 { background: #0f0; }
.c4 { background: #f0f; }
.c5 { background: #ff0; }
.c6 { background: #ff8080; }
.c7 { background: #800000; }
.params {
  width: 188px;
  height: 285px;
  padding: 4px 4px 0 2px;
  border: 1px solid #a0a0a0;
}
.params .check {
  margin: 0 0 2px 2px;
}
.param {
  display: flex;
  gap: 4px;
  height: 18px;
  margin-bottom: 3px;
}
.param.gap {
  margin-top: 24px;
}
.param label {
  width: 107px;
  padding: 0 1px;
  border: 1px solid;
  border-color: #a0a0a0 #fff #fff #a0a0a0;
}
.param .field,
.spin {
  flex: 1;
}
.spin {
  display: grid;
  grid-template-columns: 1fr 16px;
  grid-template-rows: 1fr 1fr;
  border: 2px solid;
  border-color: #8c8c8c #fff #fff #8c8c8c;
}
.spin input {
  grid-row: span 2;
  width: 100%;
  min-width: 0;
  padding: 0 2px;
  border: 0;
  background: none;
  color: #808080;
  line-height: 14px;
}
.spin i {
  border-right: 1px solid #696969;
  border-bottom: 1px solid #696969;
}
.advance {
  display: flex;
  justify-content: flex-end;
  gap: 7px;
  margin-top: 30px;
}
.advance .btn {
  width: 37px;
  height: 22px;
}
.advance .btn:last-child {
  width: 82px;
}
.param-name {
  display: flex;
  width: 188px;
  margin-top: 4px;
}
.param-name .btn {
  width: 72px;
  height: 19px;
}
.param-name input {
  flex: 1;
  min-width: 0;
  height: 19px;
  padding: 0 1px;
  border: 1px solid;
  border-color: #808080 #fff #fff #808080;
  background: none;
  line-height: 14px;
}
.lib {
  width: 189px;
  height: 24px;
}

/* status line and the strip under the window */
.status {
  height: 21px;
  padding: 4px 5px 0;
  border-top: 1px solid #a0a0a0;
  font: 11px/16px "Noto Sans", sans-serif;
}
.strip {
  display: flex;
  height: 8px;
  background: #d4d4d4;
}
.strip i {
  width: 342px;
  margin-left: 52px;
  background: #fff;
}
.strip i + i {
  width: 48px;
  margin-left: 786px;
  background: #f0f0f0;
}
```
FILE: script.js
```js
const canvas = document.getElementById('canvas');
const NS = 'http://www.w3.org/2000/svg';
const SCALE = 6.585; // pixels per millimetre
const RULER = 20;
const FIELD = 110; // work area in mm

function add(parent, name, attrs, text) {
  const el = document.createElementNS(NS, name);
  for (const key in attrs) el.setAttribute(key, attrs[key]);
  if (text !== undefined) el.textContent = text;
  parent.appendChild(el);
  return el;
}

function tickSize(n) {
  if (n % 10 === 0) return 10;
  return n % 5 === 0 ? 8 : 5;
}

function draw() {
  canvas.innerHTML = '';
  const { width, height } = canvas.getBoundingClientRect();
  const cx = Math.round(width / 2) + 9;
  const cy = Math.round(height / 2) + 10;

  const ruler = add(canvas, 'g', { class: 'ruler' });
  let d = `M${RULER + 1} ${RULER + 0.5}H${width - 2}M${RULER - 0.5} ${RULER + 2}V${height}`;
  for (let n = Math.ceil((RULER - cx) / SCALE); cx + n * SCALE < width; n++) {
    const x = Math.round(cx + n * SCALE) + 0.5;
    d += `M${x} ${RULER}v${-tickSize(n)}`;
    if (n % 10 === 0) add(ruler, 'text', { x, y: 9 }, n);
  }
  for (let n = Math.ceil((cy - height) / SCALE); cy - n * SCALE > RULER + 4; n++) {
    const y = Math.round(cy - n * SCALE) + 0.5;
    d += `M${RULER} ${y}h${-tickSize(n)}`;
    if (n % 10 === 0) add(ruler, 'text', { transform: `translate(8 ${y}) rotate(-90)` }, n);
  }
  // cursor marks
  d += `M${cx + 178.5} 0V${RULER}M0 ${cy + 167.5}H${RULER}`;
  add(ruler, 'path', { d, stroke: '#000', fill: 'none' });

  const size = Math.round(FIELD * SCALE);
  const left = cx - Math.round(size / 2) + 0.5;
  const top = cy - Math.round(size / 2) + 0.5;
  add(canvas, 'rect', { x: left + 6, y: top + 6, width: size, height: size, fill: '#808080' });
  add(canvas, 'rect', { x: left, y: top, width: size, height: size, fill: '#fff', stroke: '#000' });

  add(canvas, 'text', { x: cx, y: cy + 14, class: 'drawing-text' }, 'TEXT');
  for (const x of [-47, 0, 48]) {
    for (const y of [-21, 1, 23]) {
      if (x === 0 && y === 1) continue;
      add(canvas, 'rect', { x: cx + x - 4, y: cy + y - 3, width: 7, height: 7, fill: '#404040' });
    }
  }
  add(canvas, 'path', { d: `M${cx - 3} ${cy - 2}l6 6m0-6l-6 6`, stroke: '#404040', 'stroke-width': 2 });
}

draw();
window.addEventListener('resize', draw);
```
